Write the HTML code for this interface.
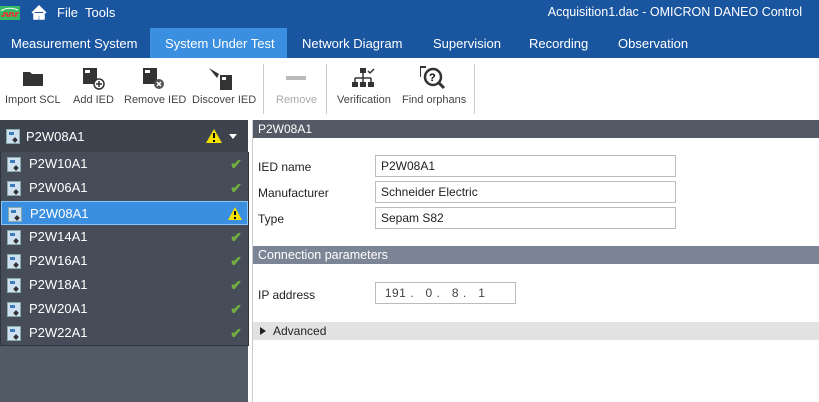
<!DOCTYPE html>
<html><head><meta charset="utf-8"><style>
*{margin:0;padding:0;box-sizing:border-box}
body{width:819px;height:402px;overflow:hidden;font-family:"Liberation Sans",sans-serif;font-size:12px;background:#fff;position:relative}
.abs{position:absolute;white-space:nowrap}
#title{left:0;top:0;width:819px;height:28px;background:#1a56a0;color:#fff;font-size:13px}
#tabs{left:0;top:28px;width:819px;height:30px;background:#1a56a0;color:#fff;font-size:13px}
.tab{position:absolute;top:0;height:30px;line-height:31px;white-space:nowrap}
#tb{left:0;top:58px;width:819px;height:62px;background:#fff}
.tbi{position:absolute;top:36px;font-size:11px;color:#444;white-space:nowrap}
.sep{position:absolute;top:6px;width:1px;height:50px;background:#ccc}
#left{left:0;top:120px;width:248px;height:282px;background:#525a66}
#lhead{left:0;top:120px;width:248px;height:32px;background:#3c434d;color:#fff;font-size:13px}
#list{left:0;top:152px;width:249px;height:194px;background:#464d58;border:1px solid #2f353d;border-top:none}
.it{position:absolute;left:0;width:247px;height:24px;color:#fff;font-size:13px;line-height:24px}
.it .n{position:absolute;left:28px}
.ic{position:absolute;left:6px;top:5px;width:14px;height:15px;background:#cfe0f0;border:1px solid #8aa}
.ic:before{content:"";position:absolute;left:2px;top:2px;width:5px;height:3px;background:#3a7cc0}
.ic:after{content:"";position:absolute;left:6px;top:8px;width:4px;height:4px;background:#333;transform:rotate(45deg)}
.ck{position:absolute;right:6px;top:0;color:#72b23c;font-size:14px;font-weight:bold}
#right{left:252px;top:120px;width:567px;height:282px;background:#fff;border-left:1px solid #ccc}
.lab{position:absolute;left:258px;font-size:12px;color:#222}
.fld{position:absolute;left:375px;width:301px;height:22px;border:1px solid #bbb;padding-left:5px;line-height:20px;color:#222;white-space:nowrap}
</style></head><body>
<div id="title" class="abs">
 <svg class="abs" style="left:0;top:4px" width="20" height="18"><rect x="0" y="2" width="20" height="14" fill="#3b6"/><path d="M1 12h3v-3h3v3h3v-3h3v3h3v-3h3" stroke="#e33" fill="none" stroke-width="1.5"/><path d="M1 7 Q8 2 18 6" stroke="#fff" fill="none"/></svg>
 <svg class="abs" style="left:31px;top:4px" width="16" height="16"><path d="M1 9 L8 2 L15 9 M3 8 V15 H7 V11 H9 V15 H13 V8" fill="#fff" stroke="#fff" stroke-width="1.5"/></svg>
 <span class="abs" style="left:57px;top:5px">File</span>
 <span class="abs" style="left:85px;top:5px">Tools</span>
 <span class="abs" style="right:17px;top:5px;font-size:12.5px">Acquisition1.dac - OMICRON DANEO Control</span>
</div>
<div id="tabs" class="abs">
 <div class="tab" style="left:11px">Measurement System</div>
 <div class="tab" style="left:150px;width:137px;background:#3b8fe0;padding-left:15px">System Under Test</div>
 <div class="tab" style="left:302px">Network Diagram</div>
 <div class="tab" style="left:433px">Supervision</div>
 <div class="tab" style="left:529px">Recording</div>
 <div class="tab" style="left:618px">Observation</div>
</div>
<div id="tb" class="abs">
 <svg class="abs" style="left:23px;top:12px" width="20" height="16"><path d="M0 2h7l2 2h11v12H0z" fill="#333"/></svg>
 <svg class="abs" style="left:83px;top:10px" width="22" height="22"><rect x="0" y="0" width="14" height="16" fill="#333"/><rect x="2" y="2" width="5" height="3" fill="#fff"/><circle cx="16" cy="16" r="5" fill="#fff" stroke="#333" stroke-width="1.5"/><path d="M13 16h6M16 13v6" stroke="#333" stroke-width="1.5"/></svg>
 <svg class="abs" style="left:143px;top:10px" width="22" height="22"><rect x="0" y="0" width="14" height="16" fill="#333"/><rect x="2" y="2" width="5" height="3" fill="#fff"/><circle cx="16" cy="16" r="5" fill="#555"/><path d="M14 14l4 4M18 14l-4 4" stroke="#fff" stroke-width="1.5"/></svg>
 <svg class="abs" style="left:209px;top:8px" width="26" height="26"><path d="M0 2 L10 8 L8 12 Z" fill="#333"/><rect x="11" y="9" width="12" height="15" fill="#333"/><rect x="13" y="11" width="4" height="3" fill="#fff"/></svg>
 <div class="abs" style="left:286px;top:18px;width:20px;height:4px;background:#bbb"></div>
 <svg class="abs" style="left:352px;top:10px" width="24" height="20"><rect x="8" y="0" width="6" height="5" fill="#333"/><path d="M11 5v5M3 10h16M3 10v4M11 10v4M19 10v4" stroke="#333" stroke-width="1.5" fill="none"/><rect x="0" y="14" width="6" height="5" fill="#333"/><rect x="8" y="14" width="6" height="5" fill="#333"/><rect x="16" y="14" width="6" height="5" fill="#333"/><path d="M16 3l2 2 4-4" stroke="#333" stroke-width="1.5" fill="none"/></svg>
 <svg class="abs" style="left:420px;top:7px" width="26" height="26"><path d="M0 2h6M0 2v10" stroke="#333" stroke-width="2"/><circle cx="13" cy="12" r="8" fill="#fff" stroke="#333" stroke-width="2.5"/><text x="9" y="16" font-size="11" font-weight="bold" font-family="Liberation Sans">?</text><path d="M19 18l5 5" stroke="#333" stroke-width="3"/></svg>
 <span class="tbi" style="left:5px">Import SCL</span>
 <span class="tbi" style="left:73px">Add IED</span>
 <span class="tbi" style="left:124px">Remove IED</span>
 <span class="tbi" style="left:192px">Discover IED</span>
 <div class="sep" style="left:263px"></div>
 <span class="tbi" style="left:276px;color:#aaa">Remove</span>
 <div class="sep" style="left:326px"></div>
 <span class="tbi" style="left:337px">Verification</span>
 <span class="tbi" style="left:402px">Find orphans</span>
 <div class="sep" style="left:474px"></div>
</div>
<div id="left" class="abs"></div>
<div id="lhead" class="abs">
 <div class="ic" style="top:9px"></div>
 <span class="abs" style="left:26px;top:9px">P2W08A1</span>
 <svg class="abs" style="left:206px;top:9px" width="16" height="14"><path d="M8 0 L16 14 H0 Z" fill="#f5e000"/><path d="M8 4v5M8 11v2" stroke="#000" stroke-width="2"/></svg>
 <svg class="abs" style="left:229px;top:14px" width="8" height="5"><path d="M0 0h8L4 5z" fill="#fff"/></svg>
</div>
<div id="list" class="abs">
 <div class="it" style="top:0"><div class="ic"></div><span class="n">P2W10A1</span><span class="ck">✔</span></div>
 <div class="it" style="top:24px"><div class="ic"></div><span class="n">P2W06A1</span><span class="ck">✔</span></div>
 <div class="it" style="top:49px;background:#3b8fe0;border:1px solid #8cc4f5"><div class="ic"></div><span class="n">P2W08A1</span><svg class="abs" style="right:5px;top:5px" width="14" height="13"><path d="M7 0 L14 13 H0 Z" fill="#f5e000"/><path d="M7 4v4M7 10v2" stroke="#000" stroke-width="2"/></svg></div>
 <div class="it" style="top:73px"><div class="ic"></div><span class="n">P2W14A1</span><span class="ck">✔</span></div>
 <div class="it" style="top:97px"><div class="ic"></div><span class="n">P2W16A1</span><span class="ck">✔</span></div>
 <div class="it" style="top:121px"><div class="ic"></div><span class="n">P2W18A1</span><span class="ck">✔</span></div>
 <div class="it" style="top:145px"><div class="ic"></div><span class="n">P2W20A1</span><span class="ck">✔</span></div>
 <div class="it" style="top:169px"><div class="ic"></div><span class="n">P2W22A1</span><span class="ck">✔</span></div>
</div>
<div id="right" class="abs"></div>
<div class="abs" style="left:253px;top:120px;width:566px;height:18px;background:#535a66;color:#fff;padding-left:5px;line-height:18px">P2W08A1</div>
<span class="lab" style="top:160px">IED name</span><div class="fld" style="top:155px">P2W08A1</div>
<span class="lab" style="top:186px">Manufacturer</span><div class="fld" style="top:181px">Schneider Electric</div>
<span class="lab" style="top:212px">Type</span><div class="fld" style="top:207px">Sepam S82</div>
<div class="abs" style="left:253px;top:246px;width:566px;height:18px;background:#7c8595;color:#fff;padding-left:5px;line-height:18px;font-size:12.5px">Connection parameters</div>
<span class="lab" style="top:288px">IP address</span>
<div class="fld" style="top:282px;width:141px;color:#444;letter-spacing:0.5px">&nbsp;191 .&nbsp;&nbsp; 0 .&nbsp;&nbsp; 8 .&nbsp;&nbsp; 1</div>
<div class="abs" style="left:253px;top:322px;width:566px;height:18px;background:#e2e2e2;line-height:18px;color:#222">
 <svg class="abs" style="left:7px;top:5px" width="6" height="8"><path d="M0 0L6 4L0 8z" fill="#222"/></svg>
 <span class="abs" style="left:20px">Advanced</span>
</div>
</body></html>
